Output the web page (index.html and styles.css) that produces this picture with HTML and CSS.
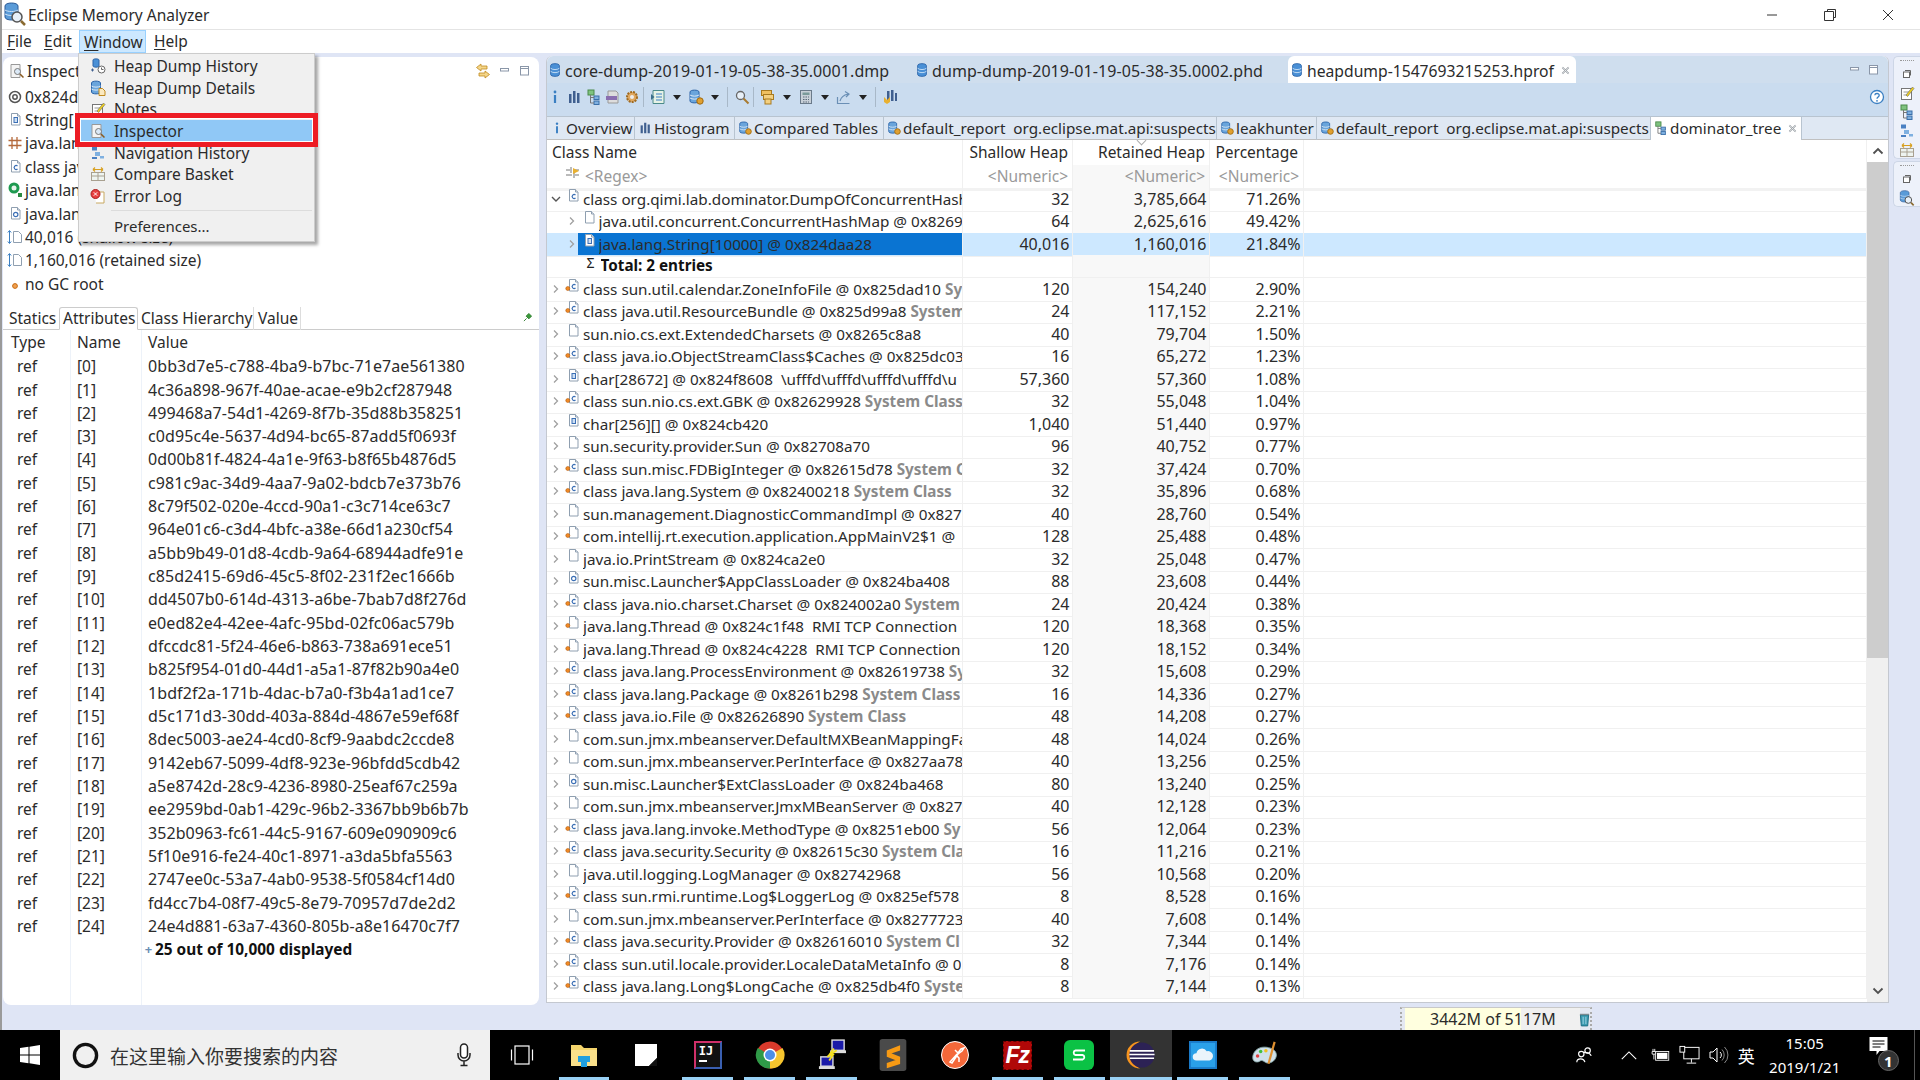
FILE: index.html
```html
<!DOCTYPE html>
<html lang="en">
<head>
<meta charset="utf-8">
<title>Eclipse Memory Analyzer</title>
<link rel="stylesheet" href="styles.css">
</head>
<body>
<svg class="defs" width="0" height="0">
  <symbol id="db" viewBox="0 0 16 16"><path d="M3 3c0-3 10-3 10 0v10c0 3-10 3-10 0z" fill="#4a90d6" stroke="#2a63a8"/><path d="M3 6c2 2 8 2 10 0M3 9.500c2 2 8 2 10 0" stroke="#cfe3f7" fill="none"/></symbol>
  <symbol id="dbc" viewBox="0 0 16 16"><path d="M2 3c0-2.500 9-2.500 9 0v9c0 2.500-9 2.500-9 0z" fill="#6aa5dc" stroke="#2a63a8"/><path d="M2 6c2 1.500 7 1.500 9 0M2 9c2 1.500 7 1.500 9 0" stroke="#dbe9f7" fill="none"/><circle cx="12" cy="12" r="3.200" fill="#e0a030" stroke="#a06a10"/></symbol>
  <symbol id="doc" viewBox="0 0 16 16"><path d="M4.500 1.500h6l2.500 2.500v9h-8.500z" fill="#fff" stroke="#8f9fb0"/><path d="M10.500 1.500v2.500h2.500" fill="#e8eef5" stroke="#8f9fb0"/></symbol>
  <symbol id="cls" viewBox="0 0 16 16"><use href="#doc"/><path d="M10.500 7a2 2 0 1 0 0 3" fill="none" stroke="#3b6fb5" stroke-width="1.200"/></symbol>
  <symbol id="scls" viewBox="0 0 16 16"><use href="#cls"/><circle cx="2.800" cy="10.500" r="2" fill="#f08a24" stroke="#b45a10" stroke-width=".6"/></symbol>
  <symbol id="sdoc" viewBox="0 0 16 16"><use href="#doc"/><circle cx="2.800" cy="10.500" r="2" fill="#f08a24" stroke="#b45a10" stroke-width=".6"/></symbol>
  <symbol id="arr" viewBox="0 0 16 16"><use href="#doc"/><rect x="7" y="5.500" width="3.500" height="5" fill="#cfe0f3" stroke="#3b6fb5"/></symbol>
  <symbol id="ldr" viewBox="0 0 16 16"><use href="#doc"/><circle cx="8.700" cy="8.500" r="2.200" fill="none" stroke="#3b6fb5" stroke-width="1.200"/></symbol>
  <symbol id="sizei" viewBox="0 0 16 16"><path d="M2.500 2v12M.8 3.500 2.500 1.500 4.200 3.500M.8 12.500 2.500 14.500 4.200 12.500" stroke="#3a7fc2" fill="none"/><path d="M6.500 2.500h5l3 3v8h-8z" fill="#fff" stroke="#8f9fb0"/></symbol>
  <symbol id="insp" viewBox="0 0 16 16"><path d="M2 1.500h9v13H2z" fill="#f4f4f4" stroke="#999"/><circle cx="8.500" cy="8.500" r="3" fill="#dbe9f7" stroke="#777"/><path d="m11 11 3.500 3.500" stroke="#8a5a20" stroke-width="1.500"/></symbol>
  <symbol id="hist" viewBox="0 0 16 16"><rect x="3" y="5" width="2.500" height="9" fill="#3f5f8f"/><rect x="7" y="2" width="2.500" height="12" fill="#3f5f8f"/><rect x="11" y="4" width="2.500" height="10" fill="#3f5f8f"/></symbol>
  <symbol id="info" viewBox="0 0 16 16"><circle cx="8" cy="3" r="1.400" fill="#3a7fc2"/><path d="M8 6v8" stroke="#3a7fc2" stroke-width="2.200"/></symbol>
  <symbol id="tree" viewBox="0 0 16 16"><rect x="2" y="1" width="6" height="5" fill="#7fc27f" stroke="#4a8a4a"/><rect x="8" y="7" width="5" height="3.500" fill="#7fb0e0" stroke="#3a6fa8"/><rect x="8" y="12" width="5" height="3.500" fill="#7fb0e0" stroke="#3a6fa8"/><path d="M4.500 6v8h3.500M4.500 8.500h3.500" stroke="#777" fill="none"/></symbol>
  <symbol id="gear" viewBox="0 0 16 16"><circle cx="8" cy="8" r="5" fill="#e0a860" stroke="#a06a20" stroke-width="2" stroke-dasharray="2 1"/><circle cx="8" cy="8" r="2" fill="#eee"/></symbol>
  <symbol id="sql" viewBox="0 0 16 16"><path d="M3 2h8l2 2v10H3z" fill="#ddd" stroke="#999"/><rect x="1" y="7" width="11" height="4" fill="#8a6fb0"/></symbol>
  <symbol id="xml" viewBox="0 0 16 16"><path d="M3 1.500h11v13H3z" fill="#e6f2e6" stroke="#4a8a8a"/><path d="M6 5h6M6 8h6M6 11h6" stroke="#3a7fc2"/><path d="M1 5v6l3.500-3z" fill="#3a6f8a"/></symbol>
  <symbol id="mag" viewBox="0 0 16 16"><circle cx="6.500" cy="6.500" r="4" fill="#e8f0f8" stroke="#666" stroke-width="1.300"/><path d="m9.500 9.500 5 5" stroke="#a87a30" stroke-width="2"/></symbol>
  <symbol id="grp" viewBox="0 0 16 16"><rect x="1.500" y="1.500" width="10" height="5" fill="#f0c060" stroke="#a87a20"/><rect x="3.500" y="5.500" width="10" height="5" fill="#f4d080" stroke="#a87a20"/><rect x="5" y="10" width="6" height="5" fill="#f4d080" stroke="#a87a20"/></symbol>
  <symbol id="calc" viewBox="0 0 16 16"><rect x="2.500" y="1.500" width="11" height="13" fill="#c8d0d8" stroke="#6a7a8a"/><rect x="4.500" y="3.500" width="7" height="2.500" fill="#7a9a9a"/><path d="M5 8h6M5 10.500h6M5 13h6" stroke="#5a6a7a" stroke-dasharray="1.500 1"/></symbol>
  <symbol id="exp" viewBox="0 0 16 16"><path d="M1.500 8v6.500h12" fill="none" stroke="#6a8fb5" stroke-width="1.200"/><path d="M4 12c1-4 4-6 8-7M9 2.500 13 5l-3 3" fill="none" stroke="#6a8fb5" stroke-width="1.200"/></symbol>
  <symbol id="run" viewBox="0 0 16 16"><rect x="5" y="2" width="2.500" height="10" fill="#3f5f8f"/><rect x="9" y="1" width="2.500" height="11" fill="#3f5f8f"/><rect x="13" y="4" width="2" height="8" fill="#3f5f8f"/><path d="M2 8l3 3 3-3v5l-3 2-3-2z" fill="#e8b030"/></symbol>
  <symbol id="sync" viewBox="0 0 16 16"><path d="M6 1 1.500 4.500 6 8V6h6V3H6zM10 8l4.500 3.500L10 15v-2H4v-3h6z" fill="#f4d68a" stroke="#c08a20" stroke-width=".8"/></symbol>
  <symbol id="minv" viewBox="0 0 12 12"><rect x="1.500" y="3.500" width="8" height="2.500" fill="#fff" stroke="#8a96a8"/></symbol>
  <symbol id="maxv" viewBox="0 0 12 12"><rect x="1.500" y="1.500" width="8" height="8.500" fill="#fff" stroke="#8a96a8"/><path d="M1.500 3.500h8" stroke="#8a96a8"/></symbol>
  <symbol id="x" viewBox="0 0 10 10"><path d="M1.500 1.500 8.500 8.500M8.500 1.500 1.500 8.500" stroke="#9aa0a6" stroke-width="1.800"/><path d="M1.500 1.500 8.500 8.500M8.500 1.500 1.500 8.500" stroke="#fff" stroke-width=".6"/></symbol>
  <symbol id="tw-r" viewBox="0 0 18 10"><path d="m7 1.500 3.500 3.500L7 8.500" fill="none" stroke="#a0a0a0" stroke-width="1.300"/></symbol>
  <symbol id="tw-d" viewBox="0 0 18 10"><path d="M5 3 9 7 13 3" fill="none" stroke="#555" stroke-width="1.400"/></symbol>
  <symbol id="dd" viewBox="0 0 8 5"><path d="M0 0h8L4 5z" fill="#222"/></symbol>
  <symbol id="notes" viewBox="0 0 16 16"><rect x="2.500" y="3.500" width="10" height="11" fill="#fff" stroke="#777"/><path d="M4.500 7h6M4.500 10h5" stroke="#999"/><path d="M7 10 13.500 2l1.500 1.500L8.500 11.500z" fill="#f0d020" stroke="#666" stroke-width=".6"/></symbol>
  <symbol id="hist2" viewBox="0 0 16 16"><path d="M3 2c0-1.500 6-1.500 6 0v6c0 1.500-6 1.500-6 0z" fill="#4a90d6" stroke="#2a63a8"/><circle cx="11.500" cy="11.500" r="3.500" fill="#fff" stroke="#666"/><path d="M11.500 9.500v2h2" stroke="#666" fill="none"/><path d="M1 12h3M2.500 10.500v3" stroke="#3f5f8f"/></symbol>
  <symbol id="dbd" viewBox="0 0 16 16"><path d="M1.500 3c0-2.500 9-2.500 9 0v9c0 2.500-9 2.500-9 0z" fill="#6aa5dc" stroke="#2a63a8"/><path d="M1.500 6c2 1.500 7 1.500 9 0M1.500 9c2 1.500 7 1.500 9 0" stroke="#dbe9f7" fill="none"/><path d="M9 8.500h3.500L15 11v4.500H9z" fill="#fbe9c0" stroke="#c08a20"/></symbol>
  <symbol id="nav" viewBox="0 0 16 16"><rect x="2" y="1.500" width="5" height="4" fill="#4a80c2"/><rect x="5" y="7" width="5" height="4" fill="#7fb0e0"/><rect x="10" y="11" width="4" height="2.500" fill="#7fb0e0"/><path d="M2 13h5" stroke="#4a80c2" stroke-width="2"/></symbol>
  <symbol id="bsk" viewBox="0 0 16 16"><rect x="1.500" y="6.500" width="13" height="8" fill="#eef4f0" stroke="#a8a090"/><path d="M8 6.500v8M1.500 10h13" stroke="#a8a090"/><path d="M3 3.500h10M3 3.500 5 1.500M3 3.500 5 5.500M13 3.500 11 1.500M13 3.500 11 5.500" stroke="#d8a020" fill="none" stroke-width="1.200"/></symbol>
  <symbol id="err" viewBox="0 0 16 16"><path d="M5 4h9v11H6" fill="#fff" stroke="#c8a860"/><circle cx="5.500" cy="6" r="4.500" fill="#e84040" stroke="#a82020"/><path d="m3.800 4.300 3.400 3.400m0-3.400L3.800 7.700" stroke="#fff"/></symbol>
  <symbol id="filt" viewBox="0 0 16 16"><path d="M1 5h4M8 5h6M1 10h6M10 10h4M6 2v6M9 7v6" stroke="#777"/><path d="M8 3l6 3-6 3z" fill="#e8b030"/></symbol>
  <symbol id="pkg" viewBox="0 0 16 16"><path d="M5 2v12M10 2v12M1.500 5.500h13M1.500 10.500h13" stroke="#b4683a" stroke-width="1.300"/></symbol>
  <symbol id="at" viewBox="0 0 16 16"><circle cx="8" cy="8" r="5.500" fill="none" stroke="#555" stroke-width="1.500"/><circle cx="8" cy="8" r="2.200" fill="none" stroke="#555" stroke-width="1.500"/></symbol>
  <symbol id="gc" viewBox="0 0 16 16"><circle cx="7" cy="6" r="5.500" fill="#1e9a50"/><circle cx="7" cy="6" r="2.500" fill="#e8f4ec"/><path d="M11 11h4v4h-4z" fill="#2a8a40"/></symbol>
  <symbol id="dot" viewBox="0 0 16 16"><circle cx="8" cy="10" r="2.400" fill="#f0a050" stroke="#c86a10"/></symbol>
  <symbol id="pin" viewBox="0 0 10 10"><path d="M1 9 4 6M3.500 3.500l3-3 3 3-3 3z" fill="#3a9a3a" stroke="#2a7a2a"/></symbol>
  <symbol id="trash" viewBox="0 0 12 16"><path d="M1.500 3h9l-1 12h-7z" fill="#3a9ab0" stroke="#1a6a80"/><path d="M1 2.500h10" stroke="#7a8a90" stroke-width="1.500"/><path d="M4.500 5v8M7.500 5v8" stroke="#a8d8e8"/></symbol>
  <symbol id="help" viewBox="0 0 16 16"><circle cx="8" cy="8" r="6.500" fill="#fff" stroke="#3a7fc2" stroke-width="1.300"/><path d="M5.800 6.200C6 3.800 10.300 4 10.200 6.300 10.200 8 8 8 8 9.800" fill="none" stroke="#3a7fc2" stroke-width="1.300"/><circle cx="8" cy="11.800" r=".9" fill="#3a7fc2"/></symbol>
  <symbol id="restv" viewBox="0 0 12 12"><path d="M4 2.500h5.500v5" fill="none" stroke="#666"/><rect x="2.500" y="4" width="6" height="5.500" fill="#fff" stroke="#666"/></symbol>
  <symbol id="app" viewBox="0 0 24 24"><path d="M2 4c0-4 13-4 13 0v11c0 4-13 4-13 0z" fill="#5a9bd8" stroke="#2a5a98"/><path d="M2 8c3 2 10 2 13 0M2 12c3 2 10 2 13 0" stroke="#cfe3f7" fill="none"/><circle cx="14" cy="15" r="5" fill="#e8f0f8" stroke="#555" stroke-width="1.500"/><path d="m18 19 4 4" stroke="#8a6a30" stroke-width="2.500"/></symbol>
</svg>

<div class="app">
  <header class="titlebar">
    <svg class="title-icon"><use href="#app"/></svg>
    <span class="title-text">Eclipse Memory Analyzer</span>
    <div class="winctl">
      <svg viewBox="0 0 12 12" class="wc"><path d="M1 6h10" stroke="#333"/></svg>
      <svg viewBox="0 0 12 12" class="wc"><path d="M3.500 2.500V.5h8v8h-2M.5 2.500h9v9h-9z" fill="none" stroke="#333"/></svg>
      <svg viewBox="0 0 12 12" class="wc"><path d="m1 1 10 10M11 1 1 11" stroke="#333"/></svg>
    </div>
  </header>

  <nav class="menubar">
    <span class="mb-item mb-file"><u>F</u>ile</span>
    <span class="mb-item mb-edit"><u>E</u>dit</span>
    <span class="mb-item mb-win"><u>W</u>indow</span>
    <span class="mb-item mb-help"><u>H</u>elp</span>
  </nav>

  <div class="workspace">
    <section class="left">
      <div class="left-head">
        <svg class="lic"><use href="#insp"/></svg><span>Inspector</span>
        <span class="spacer"></span>
        <svg class="vb big"><use href="#sync"/></svg>
        <svg class="vb"><use href="#minv"/></svg>
        <svg class="vb"><use href="#maxv"/></svg>
      </div>
      <div class="prop"><svg class="lic"><use href="#at"/></svg>0x824daa28</div>
      <div class="prop"><svg class="lic"><use href="#arr"/></svg>String[10000]</div>
      <div class="prop"><svg class="lic"><use href="#pkg"/></svg>java.lang</div>
      <div class="prop"><svg class="lic"><use href="#cls"/></svg>class java.lang.String[]</div>
      <div class="prop"><svg class="lic"><use href="#gc"/></svg>java.lang.Class</div>
      <div class="prop"><svg class="lic"><use href="#ldr"/></svg>java.lang.ClassLoader</div>
      <div class="prop"><svg class="lic"><use href="#sizei"/></svg>40,016 (shallow size)</div>
      <div class="prop"><svg class="lic"><use href="#sizei"/></svg>1,160,016 (retained size)</div>
      <div class="prop"><svg class="lic"><use href="#dot"/></svg>no GC root</div>

      <div class="ltabs">
        <span class="ltab w-st">Statics</span>
        <span class="ltab w-at on">Attributes</span>
        <span class="ltab w-ch">Class Hierarchy</span>
        <span class="ltab w-va">Value</span>
        <span class="spacer"></span>
        <svg class="pin"><use href="#pin"/></svg>
      </div>
      <div class="ltable">
        <div class="lrow lhead"><span class="c1h">Type</span><span class="c2">Name</span><span class="c3">Value</span></div>
        <div class="lrow"><span class="c1">ref</span><span class="c2">[0]</span><span class="c3">0bb3d7e5-c788-4ba9-b7bc-71e7ae561380</span></div>
        <div class="lrow"><span class="c1">ref</span><span class="c2">[1]</span><span class="c3">4c36a898-967f-40ae-acae-e9b2cf287948</span></div>
        <div class="lrow"><span class="c1">ref</span><span class="c2">[2]</span><span class="c3">499468a7-54d1-4269-8f7b-35d88b358251</span></div>
        <div class="lrow"><span class="c1">ref</span><span class="c2">[3]</span><span class="c3">c0d95c4e-5637-4d94-bc65-87add5f0693f</span></div>
        <div class="lrow"><span class="c1">ref</span><span class="c2">[4]</span><span class="c3">0d00b81f-4824-4a1e-9f63-b8f65b4876d5</span></div>
        <div class="lrow"><span class="c1">ref</span><span class="c2">[5]</span><span class="c3">c981c9ac-34d9-4aa7-9a02-bdcb7e373b76</span></div>
        <div class="lrow"><span class="c1">ref</span><span class="c2">[6]</span><span class="c3">8c79f502-020e-4ccd-90a1-c3c714ce63c7</span></div>
        <div class="lrow"><span class="c1">ref</span><span class="c2">[7]</span><span class="c3">964e01c6-c3d4-4bfc-a38e-66d1a230cf54</span></div>
        <div class="lrow"><span class="c1">ref</span><span class="c2">[8]</span><span class="c3">a5bb9b49-01d8-4cdb-9a64-68944adfe91e</span></div>
        <div class="lrow"><span class="c1">ref</span><span class="c2">[9]</span><span class="c3">c85d2415-69d6-45c5-8f02-231f2ec1666b</span></div>
        <div class="lrow"><span class="c1">ref</span><span class="c2">[10]</span><span class="c3">dd4507b0-614d-4313-a6be-7bab7d8f276d</span></div>
        <div class="lrow"><span class="c1">ref</span><span class="c2">[11]</span><span class="c3">e0ed82e4-42ee-4afc-95bd-02fc06ac579b</span></div>
        <div class="lrow"><span class="c1">ref</span><span class="c2">[12]</span><span class="c3">dfccdc81-5f24-46e6-b863-738a691ece51</span></div>
        <div class="lrow"><span class="c1">ref</span><span class="c2">[13]</span><span class="c3">b825f954-01d0-44d1-a5a1-87f82b90a4e0</span></div>
        <div class="lrow"><span class="c1">ref</span><span class="c2">[14]</span><span class="c3">1bdf2f2a-171b-4dac-b7a0-f3b4a1ad1ce7</span></div>
        <div class="lrow"><span class="c1">ref</span><span class="c2">[15]</span><span class="c3">d5c171d3-30dd-403a-884d-4867e59ef68f</span></div>
        <div class="lrow"><span class="c1">ref</span><span class="c2">[16]</span><span class="c3">8dec5003-ae24-4cd0-8cf9-9aabdc2ccde8</span></div>
        <div class="lrow"><span class="c1">ref</span><span class="c2">[17]</span><span class="c3">9142eb67-5099-4df8-923e-96bfdd5cdb42</span></div>
        <div class="lrow"><span class="c1">ref</span><span class="c2">[18]</span><span class="c3">a5e8742d-28c9-4236-8980-25eaf67c259a</span></div>
        <div class="lrow"><span class="c1">ref</span><span class="c2">[19]</span><span class="c3">ee2959bd-0ab1-429c-96b2-3367bb9b6b7b</span></div>
        <div class="lrow"><span class="c1">ref</span><span class="c2">[20]</span><span class="c3">352b0963-fc61-44c5-9167-609e090909c6</span></div>
        <div class="lrow"><span class="c1">ref</span><span class="c2">[21]</span><span class="c3">5f10e916-fe24-40c1-8971-a3da5bfa5563</span></div>
        <div class="lrow"><span class="c1">ref</span><span class="c2">[22]</span><span class="c3">2747ee0c-53a7-4ab0-9538-5f0584cf14d0</span></div>
        <div class="lrow"><span class="c1">ref</span><span class="c2">[23]</span><span class="c3">fd4cc7b4-08f7-49c5-8e79-70957d7de2d2</span></div>
        <div class="lrow"><span class="c1">ref</span><span class="c2">[24]</span><span class="c3">24e4d881-63a7-4360-805b-a8e16470c7f7</span></div>
        <div class="lrow"><span class="c1"></span><span class="c2"></span><span class="c3 more"><b class="plus">+</b><b>25 out of 10,000 displayed</b></span></div>
        <div class="lrow lfill"><span class="c1"></span><span class="c2"></span><span class="c3"></span></div>
      </div>
    </section>

    <section class="right">
      <div class="ftabs">
        <span class="ftab f1"><svg class="tic"><use href="#db"/></svg>core-dump-2019-01-19-05-38-35.0001.dmp</span>
        <span class="ftab f2"><svg class="tic"><use href="#db"/></svg>dump-dump-2019-01-19-05-38-35.0002.phd</span>
        <span class="ftab f3 on"><svg class="tic"><use href="#db"/></svg>heapdump-1547693215253.hprof<svg class="xic"><use href="#x"/></svg></span>
        <span class="spacer"></span>
        <svg class="vb"><use href="#minv"/></svg>
        <svg class="vb end"><use href="#maxv"/></svg>
      </div>
      <div class="toolbar">
        <svg class="tb"><use href="#info"/></svg>
        <svg class="tb"><use href="#hist"/></svg>
        <svg class="tb"><use href="#tree"/></svg>
        <svg class="tb"><use href="#sql"/></svg>
        <svg class="tb"><use href="#gear"/></svg>
        <i class="tsep"></i>
        <svg class="tb"><use href="#xml"/></svg><svg class="ddi"><use href="#dd"/></svg>
        <svg class="tb"><use href="#dbc"/></svg><svg class="ddi"><use href="#dd"/></svg>
        <i class="tsep"></i>
        <svg class="tb"><use href="#mag"/></svg>
        <i class="tsep"></i>
        <svg class="tb"><use href="#grp"/></svg><svg class="ddi"><use href="#dd"/></svg>
        <svg class="tb"><use href="#calc"/></svg><svg class="ddi"><use href="#dd"/></svg>
        <svg class="tb"><use href="#exp"/></svg><svg class="ddi"><use href="#dd"/></svg>
        <i class="tsep"></i>
        <svg class="tb"><use href="#run"/></svg>
        <span class="spacer"></span>
        <svg class="tb hlp"><use href="#help"/></svg>
      </div>
      <div class="itabs">
        <span class="itab i1"><svg class="tic"><use href="#info"/></svg>Overview</span>
        <span class="itab i2"><svg class="tic"><use href="#hist"/></svg>Histogram</span>
        <span class="itab i3"><svg class="tic"><use href="#dbc"/></svg>Compared Tables</span>
        <span class="itab i4"><svg class="tic"><use href="#dbc"/></svg>default_report  org.eclipse.mat.api:suspects</span>
        <span class="itab i5"><svg class="tic"><use href="#dbc"/></svg>leakhunter</span>
        <span class="itab i6"><svg class="tic"><use href="#dbc"/></svg>default_report  org.eclipse.mat.api:suspects</span>
        <span class="itab i7 on"><svg class="tic"><use href="#tree"/></svg>dominator_tree<svg class="xic"><use href="#x"/></svg></span>
      </div>
      <div class="tablewrap">
        <div class="tree">
          <div class="row head"><span class="name hn">Class Name</span><span class="num">Shallow Heap</span><span class="num ret sorted">Retained Heap</span><span class="num pct">Percentage</span><span class="rest"></span></div>
          <div class="row filter"><span class="name fn"><svg class="ic"><use href="#filt"/></svg>&lt;Regex&gt;</span><span class="num">&lt;Numeric&gt;</span><span class="num ret">&lt;Numeric&gt;</span><span class="num">&lt;Numeric&gt;</span><span class="rest"></span></div>

          <div class="row"><span class="name"><svg class="tw"><use href="#tw-d"/></svg><svg class="ic"><use href="#cls"/></svg><span class="t">class org.qimi.lab.dominator.DumpOfConcurrentHash</span></span><span class="num">32</span><span class="num ret">3,785,664</span><span class="num">71.26%</span><span class="rest"></span></div>
          <div class="row l1"><span class="name"><svg class="tw"><use href="#tw-r"/></svg><svg class="ic"><use href="#doc"/></svg><span class="t">java.util.concurrent.ConcurrentHashMap @ 0x8269</span></span><span class="num">64</span><span class="num ret">2,625,616</span><span class="num">49.42%</span><span class="rest"></span></div>
          <div class="row l1 sel"><span class="name"><svg class="tw"><use href="#tw-r"/></svg><span class="selbox"><svg class="ic"><use href="#arr"/></svg><span class="t">java.lang.String[10000] @ 0x824daa28</span></span></span><span class="num">40,016</span><span class="num ret">1,160,016</span><span class="num">21.84%</span><span class="rest"></span></div>
          <div class="row l1 total"><span class="name"><span class="tw"></span><span class="sig">Σ</span><b class="t">Total: 2 entries</b></span><span class="num"></span><span class="num ret"></span><span class="num"></span><span class="rest"></span></div>

          <div class="row"><span class="name"><svg class="tw"><use href="#tw-r"/></svg><svg class="ic"><use href="#scls"/></svg><span class="t">class sun.util.calendar.ZoneInfoFile @ 0x825dad10 <b class="g">Sy</b></span></span><span class="num">120</span><span class="num ret">154,240</span><span class="num">2.90%</span><span class="rest"></span></div>
          <div class="row"><span class="name"><svg class="tw"><use href="#tw-r"/></svg><svg class="ic"><use href="#scls"/></svg><span class="t">class java.util.ResourceBundle @ 0x825d99a8 <b class="g">System</b></span></span><span class="num">24</span><span class="num ret">117,152</span><span class="num">2.21%</span><span class="rest"></span></div>
          <div class="row"><span class="name"><svg class="tw"><use href="#tw-r"/></svg><svg class="ic"><use href="#doc"/></svg><span class="t">sun.nio.cs.ext.ExtendedCharsets @ 0x8265c8a8</span></span><span class="num">40</span><span class="num ret">79,704</span><span class="num">1.50%</span><span class="rest"></span></div>
          <div class="row"><span class="name"><svg class="tw"><use href="#tw-r"/></svg><svg class="ic"><use href="#scls"/></svg><span class="t">class java.io.ObjectStreamClass$Caches @ 0x825dc03</span></span><span class="num">16</span><span class="num ret">65,272</span><span class="num">1.23%</span><span class="rest"></span></div>
          <div class="row"><span class="name"><svg class="tw"><use href="#tw-r"/></svg><svg class="ic"><use href="#arr"/></svg><span class="t">char[28672] @ 0x824f8608  \ufffd\ufffd\ufffd\ufffd\u</span></span><span class="num">57,360</span><span class="num ret">57,360</span><span class="num">1.08%</span><span class="rest"></span></div>
          <div class="row"><span class="name"><svg class="tw"><use href="#tw-r"/></svg><svg class="ic"><use href="#scls"/></svg><span class="t">class sun.nio.cs.ext.GBK @ 0x82629928 <b class="g">System Class</b></span></span><span class="num">32</span><span class="num ret">55,048</span><span class="num">1.04%</span><span class="rest"></span></div>
          <div class="row"><span class="name"><svg class="tw"><use href="#tw-r"/></svg><svg class="ic"><use href="#arr"/></svg><span class="t">char[256][] @ 0x824cb420</span></span><span class="num">1,040</span><span class="num ret">51,440</span><span class="num">0.97%</span><span class="rest"></span></div>
          <div class="row"><span class="name"><svg class="tw"><use href="#tw-r"/></svg><svg class="ic"><use href="#doc"/></svg><span class="t">sun.security.provider.Sun @ 0x82708a70</span></span><span class="num">96</span><span class="num ret">40,752</span><span class="num">0.77%</span><span class="rest"></span></div>
          <div class="row"><span class="name"><svg class="tw"><use href="#tw-r"/></svg><svg class="ic"><use href="#scls"/></svg><span class="t">class sun.misc.FDBigInteger @ 0x82615d78 <b class="g">System C</b></span></span><span class="num">32</span><span class="num ret">37,424</span><span class="num">0.70%</span><span class="rest"></span></div>
          <div class="row"><span class="name"><svg class="tw"><use href="#tw-r"/></svg><svg class="ic"><use href="#scls"/></svg><span class="t">class java.lang.System @ 0x82400218 <b class="g">System Class</b></span></span><span class="num">32</span><span class="num ret">35,896</span><span class="num">0.68%</span><span class="rest"></span></div>
          <div class="row"><span class="name"><svg class="tw"><use href="#tw-r"/></svg><svg class="ic"><use href="#doc"/></svg><span class="t">sun.management.DiagnosticCommandImpl @ 0x827</span></span><span class="num">40</span><span class="num ret">28,760</span><span class="num">0.54%</span><span class="rest"></span></div>
          <div class="row"><span class="name"><svg class="tw"><use href="#tw-r"/></svg><svg class="ic"><use href="#sdoc"/></svg><span class="t">com.intellij.rt.execution.application.AppMainV2$1 @</span></span><span class="num">128</span><span class="num ret">25,488</span><span class="num">0.48%</span><span class="rest"></span></div>
          <div class="row"><span class="name"><svg class="tw"><use href="#tw-r"/></svg><svg class="ic"><use href="#doc"/></svg><span class="t">java.io.PrintStream @ 0x824ca2e0</span></span><span class="num">32</span><span class="num ret">25,048</span><span class="num">0.47%</span><span class="rest"></span></div>
          <div class="row"><span class="name"><svg class="tw"><use href="#tw-r"/></svg><svg class="ic"><use href="#ldr"/></svg><span class="t">sun.misc.Launcher$AppClassLoader @ 0x824ba408</span></span><span class="num">88</span><span class="num ret">23,608</span><span class="num">0.44%</span><span class="rest"></span></div>
          <div class="row"><span class="name"><svg class="tw"><use href="#tw-r"/></svg><svg class="ic"><use href="#scls"/></svg><span class="t">class java.nio.charset.Charset @ 0x824002a0 <b class="g">System</b></span></span><span class="num">24</span><span class="num ret">20,424</span><span class="num">0.38%</span><span class="rest"></span></div>
          <div class="row"><span class="name"><svg class="tw"><use href="#tw-r"/></svg><svg class="ic"><use href="#sdoc"/></svg><span class="t">java.lang.Thread @ 0x824c1f48  RMI TCP Connection</span></span><span class="num">120</span><span class="num ret">18,368</span><span class="num">0.35%</span><span class="rest"></span></div>
          <div class="row"><span class="name"><svg class="tw"><use href="#tw-r"/></svg><svg class="ic"><use href="#sdoc"/></svg><span class="t">java.lang.Thread @ 0x824c4228  RMI TCP Connection</span></span><span class="num">120</span><span class="num ret">18,152</span><span class="num">0.34%</span><span class="rest"></span></div>
          <div class="row"><span class="name"><svg class="tw"><use href="#tw-r"/></svg><svg class="ic"><use href="#scls"/></svg><span class="t">class java.lang.ProcessEnvironment @ 0x82619738 <b class="g">Sy</b></span></span><span class="num">32</span><span class="num ret">15,608</span><span class="num">0.29%</span><span class="rest"></span></div>
          <div class="row"><span class="name"><svg class="tw"><use href="#tw-r"/></svg><svg class="ic"><use href="#scls"/></svg><span class="t">class java.lang.Package @ 0x8261b298 <b class="g">System Class</b></span></span><span class="num">16</span><span class="num ret">14,336</span><span class="num">0.27%</span><span class="rest"></span></div>
          <div class="row"><span class="name"><svg class="tw"><use href="#tw-r"/></svg><svg class="ic"><use href="#scls"/></svg><span class="t">class java.io.File @ 0x82626890 <b class="g">System Class</b></span></span><span class="num">48</span><span class="num ret">14,208</span><span class="num">0.27%</span><span class="rest"></span></div>
          <div class="row"><span class="name"><svg class="tw"><use href="#tw-r"/></svg><svg class="ic"><use href="#doc"/></svg><span class="t">com.sun.jmx.mbeanserver.DefaultMXBeanMappingFa</span></span><span class="num">48</span><span class="num ret">14,024</span><span class="num">0.26%</span><span class="rest"></span></div>
          <div class="row"><span class="name"><svg class="tw"><use href="#tw-r"/></svg><svg class="ic"><use href="#doc"/></svg><span class="t">com.sun.jmx.mbeanserver.PerInterface @ 0x827aa780</span></span><span class="num">40</span><span class="num ret">13,256</span><span class="num">0.25%</span><span class="rest"></span></div>
          <div class="row"><span class="name"><svg class="tw"><use href="#tw-r"/></svg><svg class="ic"><use href="#ldr"/></svg><span class="t">sun.misc.Launcher$ExtClassLoader @ 0x824ba468</span></span><span class="num">80</span><span class="num ret">13,240</span><span class="num">0.25%</span><span class="rest"></span></div>
          <div class="row"><span class="name"><svg class="tw"><use href="#tw-r"/></svg><svg class="ic"><use href="#doc"/></svg><span class="t">com.sun.jmx.mbeanserver.JmxMBeanServer @ 0x8274</span></span><span class="num">40</span><span class="num ret">12,128</span><span class="num">0.23%</span><span class="rest"></span></div>
          <div class="row"><span class="name"><svg class="tw"><use href="#tw-r"/></svg><svg class="ic"><use href="#scls"/></svg><span class="t">class java.lang.invoke.MethodType @ 0x8251eb00 <b class="g">Sy</b></span></span><span class="num">56</span><span class="num ret">12,064</span><span class="num">0.23%</span><span class="rest"></span></div>
          <div class="row"><span class="name"><svg class="tw"><use href="#tw-r"/></svg><svg class="ic"><use href="#scls"/></svg><span class="t">class java.security.Security @ 0x82615c30 <b class="g">System Cla</b></span></span><span class="num">16</span><span class="num ret">11,216</span><span class="num">0.21%</span><span class="rest"></span></div>
          <div class="row"><span class="name"><svg class="tw"><use href="#tw-r"/></svg><svg class="ic"><use href="#doc"/></svg><span class="t">java.util.logging.LogManager @ 0x82742968</span></span><span class="num">56</span><span class="num ret">10,568</span><span class="num">0.20%</span><span class="rest"></span></div>
          <div class="row"><span class="name"><svg class="tw"><use href="#tw-r"/></svg><svg class="ic"><use href="#scls"/></svg><span class="t">class sun.rmi.runtime.Log$LoggerLog @ 0x825ef578</span></span><span class="num">8</span><span class="num ret">8,528</span><span class="num">0.16%</span><span class="rest"></span></div>
          <div class="row"><span class="name"><svg class="tw"><use href="#tw-r"/></svg><svg class="ic"><use href="#doc"/></svg><span class="t">com.sun.jmx.mbeanserver.PerInterface @ 0x8277723</span></span><span class="num">40</span><span class="num ret">7,608</span><span class="num">0.14%</span><span class="rest"></span></div>
          <div class="row"><span class="name"><svg class="tw"><use href="#tw-r"/></svg><svg class="ic"><use href="#scls"/></svg><span class="t">class java.security.Provider @ 0x82616010 <b class="g">System Cl</b></span></span><span class="num">32</span><span class="num ret">7,344</span><span class="num">0.14%</span><span class="rest"></span></div>
          <div class="row"><span class="name"><svg class="tw"><use href="#tw-r"/></svg><svg class="ic"><use href="#scls"/></svg><span class="t">class sun.util.locale.provider.LocaleDataMetaInfo @ 0</span></span><span class="num">8</span><span class="num ret">7,176</span><span class="num">0.14%</span><span class="rest"></span></div>
          <div class="row"><span class="name"><svg class="tw"><use href="#tw-r"/></svg><svg class="ic"><use href="#scls"/></svg><span class="t">class java.lang.Long$LongCache @ 0x825db4f0 <b class="g">Syste</b></span></span><span class="num">8</span><span class="num ret">7,144</span><span class="num">0.13%</span><span class="rest"></span></div>
        </div>
        <div class="scroll">
          <div class="sbtn"><svg viewBox="0 0 12 8" class="sarrow"><path d="m1.500 6.500 4.500-4.500 4.500 4.500" fill="none" stroke="#505050" stroke-width="1.800"/></svg></div>
          <div class="sthumb"></div>
          <div class="strack"></div>
          <div class="sbtn"><svg viewBox="0 0 12 8" class="sarrow"><path d="m1.500 1.500 4.500 4.500 4.500-4.500" fill="none" stroke="#505050" stroke-width="1.800"/></svg></div>
        </div>
      </div>
    </section>

    <aside class="trim">
      <div class="tgroup g1">
        <i class="grip"></i>
        <svg class="trimic sm"><use href="#restv"/></svg>
        <svg class="trimic"><use href="#notes"/></svg>
        <svg class="trimic"><use href="#tree"/></svg>
        <svg class="trimic"><use href="#nav"/></svg>
        <svg class="trimic"><use href="#bsk"/></svg>
      </div>
      <div class="tgroup g2">
        <i class="grip"></i>
        <svg class="trimic sm"><use href="#restv"/></svg>
        <svg class="trimic"><use href="#app"/></svg>
      </div>
    </aside>
  </div>

  <div class="status">
    <div class="gauge"><span class="gtext">3442M of 5117M</span><svg class="trash"><use href="#trash"/></svg></div>
  </div>

  <footer class="taskbar">
    <div class="start"><svg viewBox="0 0 20 20" class="winlogo"><path d="M0 3 8.500 1.800v7.700H0zM9.500 1.700 20 0v9.500H9.500zM0 10.500h8.500v7.700L0 17zM9.500 10.500H20V20L9.500 18.300z" fill="#fff"/></svg></div>
    <div class="search">
      <svg viewBox="0 0 28 28" class="cortana"><circle cx="14" cy="14" r="11.500" fill="none" stroke="#111" stroke-width="3.500"/></svg>
      <span class="stext">在这里输入你要搜索的内容</span>
      <svg viewBox="0 0 14 24" class="micro"><rect x="3.500" y="1" width="7" height="14" rx="3.500" fill="#fff" stroke="#222" stroke-width="1.500"/><path d="M1 10v2a6 6 0 0 0 12 0v-2M7 18v4M3.500 22.500h7" fill="none" stroke="#222" stroke-width="1.500"/></svg>
    </div>
    <div class="tview"><svg viewBox="0 0 24 24" class="tvi"><rect x="5" y="3" width="14" height="18" fill="none" stroke="#fff" stroke-width="1.200"/><path d="M1.500 6.500v11M22.500 6.500v11" stroke="#fff" stroke-width="1.200"/></svg></div>
    <div class="tapp run"><svg viewBox="0 0 28 28" class="tai"><path d="M1 4h10l3 3h13v18H1z" fill="#f4d46c"/><path d="M1 9h26v16H1z" fill="#fae08a"/><rect x="8" y="15" width="12" height="6" fill="#1f9fe0"/><rect x="11" y="18" width="6" height="8" fill="#1f9fe0"/></svg></div>
    <div class="tapp"><svg viewBox="0 0 28 28" class="tai"><path d="M3 3h22v14l-8 8H3z" fill="#fff"/><path d="M25 17v8h-8z" fill="#111"/></svg></div>
    <div class="tapp run"><span class="ij"><span class="ijt">IJ</span><i class="iju"></i></span></div>
    <div class="tapp run"><svg viewBox="0 0 28 28" class="tai"><circle cx="14" cy="14" r="13.500" fill="#d93a2c"/><path d="M14 14 26.500 7A13.500 13.500 0 0 1 14 27.500z" fill="#f6c52e"/><path d="M14 14 14 27.500A13.500 13.500 0 0 1 1.800 7z" fill="#2f9a48"/><circle cx="14" cy="14" r="6.500" fill="#fff"/><circle cx="14" cy="14" r="5" fill="#4d8fe8"/></svg></div>
    <div class="tapp run"><svg viewBox="0 0 30 34" class="tai tall"><rect x="15" y="1" width="13" height="11" fill="#1a1aa8" stroke="#ddd" stroke-width="1.500"/><rect x="13" y="12" width="17" height="3" fill="#ddd"/><rect x="3" y="19" width="13" height="10" fill="#1a1aa8" stroke="#ddd" stroke-width="1.500"/><rect x="1" y="29" width="17" height="3" fill="#ddd"/><path d="m10 19 10-7M17 10l-5 7h4l-4 6" fill="none" stroke="#f4e020" stroke-width="2"/></svg></div>
    <div class="tapp"><svg viewBox="0 0 30 36" class="tai tall"><rect width="30" height="36" rx="3" fill="#4a4a4a"/><path d="M23 7v6L8 18v-5zM8 14l15 6v6L8 20zM23 22v6L8 33v-6z" fill="#f79a14"/></svg></div>
    <div class="tapp"><svg viewBox="0 0 28 28" class="tai"><circle cx="14" cy="14" r="13.500" fill="#f4683a" stroke="#fff"/><path d="M9 21 17 12l3-4 3-1-2 3-4 3-6 9zM17 12l-3-3M15 14l3 3v4" stroke="#fff" fill="none" stroke-width="1.500"/></svg></div>
    <div class="tapp run"><span class="fz">Fz</span></div>
    <div class="tapp run"><span class="wps"><svg viewBox="0 0 20 20" class="wpss"><path d="M16 5.500H6.500a2.300 2.300 0 0 0 0 4.500h7a2.300 2.300 0 0 1 0 4.500H4" fill="none" stroke="#fff" stroke-width="1.800"/></svg></span></div>
    <div class="tapp run cur"><svg viewBox="0 0 30 30" class="tai"><path d="M14 .5A14.500 14.500 0 1 0 14 29.500 16 16 0 0 1 14 .5z" fill="#f7941e"/><circle cx="16" cy="15" r="13.500" fill="#2c2255"/><path d="M3 10.500h26M2.500 14.500h27M3 18.500h26" stroke="#fff" stroke-width="1.800"/></svg></div>
    <div class="tapp run"><svg viewBox="0 0 30 30" class="tai"><rect width="30" height="30" fill="#1a7ac8"/><rect x="2" y="2" width="26" height="26" fill="#2aa0e8"/><path d="M8 21a4 4 0 0 1 0-8 6 6 0 0 1 11-2 5 5 0 0 1 3 10z" fill="#eaf4fb"/></svg></div>
    <div class="tapp run"><svg viewBox="0 0 30 32" class="tai"><path d="M14 7C6 7 1 13 1 19c0 5 5 6 8 4 3-2 5 1 8 2 6 1 11-4 11-9 0-6-7-9-14-9z" fill="#cfe0ea" stroke="#8aa"/><circle cx="6.500" cy="17" r="2" fill="#e04040"/><circle cx="10" cy="12" r="2" fill="#40c040"/><circle cx="16" cy="11" r="2" fill="#f0c020"/><path d="m26 1-7 25" stroke="#e09030" stroke-width="2.500"/></svg></div>
    <div class="tray">
      <svg viewBox="0 0 20 20" class="tr-i"><circle cx="14" cy="5" r="3" fill="none" stroke="#fff" stroke-width="1.300"/><circle cx="7" cy="9" r="3" fill="none" stroke="#fff" stroke-width="1.300"/><path d="M2 18c0-5 8-5 9 0M10 7c3 0 7 1 8 4" fill="none" stroke="#fff" stroke-width="1.300"/></svg>
      <svg viewBox="0 0 20 12" class="tr-c"><path d="m2 10 8-8 8 8" fill="none" stroke="#fff" stroke-width="1.200"/></svg>
      <svg viewBox="0 0 22 16" class="tr-b"><rect x="6" y="4" width="15" height="10" fill="none" stroke="#fff"/><rect x="7.500" y="5.500" width="12" height="7" fill="#fff"/><path d="M3 1v3M5 1v3M2 4h4v3H2zM4 7v6" stroke="#fff"/></svg>
      <svg viewBox="0 0 22 20" class="tr-n"><rect x="5" y="2" width="16" height="12" fill="none" stroke="#fff"/><rect x="1" y="1" width="5" height="6" fill="#000" stroke="#fff"/><path d="M13 14v4M8 18.500h10" stroke="#fff"/></svg>
      <svg viewBox="0 0 20 20" class="tr-v"><path d="M2 7h3l4-4v14l-4-4H2z" fill="none" stroke="#fff"/><path d="M12 7a4 4 0 0 1 0 6" fill="none" stroke="#fff"/><path d="M14 4.500a8 8 0 0 1 0 11M16.500 2a11 11 0 0 1 0 16" fill="none" stroke="#888"/></svg>
      <span class="ime">英</span>
      <div class="clock"><span>15:05</span><span>2019/1/21</span></div>
      <div class="notif"><svg viewBox="0 0 20 20" class="nbub"><path d="M1 1h18v14h-8l-3 4v-4H1z" fill="#fff"/><path d="M4 5h12M4 8h12M4 11h8" stroke="#000"/></svg><span class="nbadge">1</span></div>
      <i class="showdesk"></i>
    </div>
  </footer>

  <div class="menu">
    <div class="mi"><svg class="mic"><use href="#hist2"/></svg>Heap Dump History</div>
    <div class="mi"><svg class="mic"><use href="#dbd"/></svg>Heap Dump Details</div>
    <div class="mi"><svg class="mic"><use href="#notes"/></svg>Notes</div>
    <div class="mi hi"><svg class="mic"><use href="#insp"/></svg>Inspector<i class="redbox"></i></div>
    <div class="mi"><svg class="mic"><use href="#nav"/></svg>Navigation History</div>
    <div class="mi"><svg class="mic"><use href="#bsk"/></svg>Compare Basket</div>
    <div class="mi"><svg class="mic"><use href="#err"/></svg>Error Log</div>
    <div class="msep"></div>
    <div class="mi mi-pref"><span class="mic"></span>Preferences...</div>
  </div>
</div>
</body>
</html>
```

FILE: styles.css
```css
* { box-sizing: border-box; }
html, body { margin: 0; padding: 0; }
body { width: 1920px; height: 1080px; overflow: hidden; font-family: "Noto Sans", "Open Sans", sans-serif; font-size: 15.5px; color: #2b2b2b; background: #dfe5f5; }
.defs { position: absolute; }
svg { display: block; flex: none; overflow: visible; }
.spacer { flex: 1; }
.app { position: relative; width: 1920px; height: 1080px; display: flex; flex-direction: column; border-left: 2px solid #9a9a9a; }

.titlebar { height: 29px; display: flex; align-items: center; background: #fff; padding-left: 1px; }
.title-icon { width: 24px; height: 24px; margin-top: -2px; }
.title-text { margin-left: 1px; }
.winctl { margin-left: auto; display: flex; padding-right: 26px; }
.wc { width: 12px; height: 12px; margin-left: 46px; }

.menubar { height: 24px; display: flex; background: #fff; border-top: 1px solid #e4e4e4; padding-left: 5px; }
.mb-item { display: flex; align-items: center; height: 22px; }
.mb-item u { text-underline-offset: 2px; }
.mb-file { width: 37px; }
.mb-edit { width: 35px; }
.mb-win { width: 67px; height: 23px; padding-left: 4px; background: #cce8ff; border: 1px solid #99d1ff; }
.mb-help { margin-left: 8px; }

.workspace { flex: 1; display: flex; min-height: 0; padding: 3px 0 0 1px; }
.left { width: 536px; height: 948px; margin-top: 1px; background: #fff; border-radius: 8px; overflow: hidden; }
.left-head { height: 28px; display: flex; align-items: center; padding: 0 8px 0 6px; }
.lic { width: 16px; height: 16px; margin-right: 2px; }
.prop { height: 23.4px; display: flex; align-items: center; padding-left: 4px; white-space: nowrap; }
.vb { width: 12px; height: 12px; margin-left: 7px; }
.vb.big { width: 16px; height: 16px; }
.left-head .vb { margin-left: 8px; }
.ltabs { margin-top: 11px; height: 23px; display: flex; border-bottom: 1px solid #ccc; padding-left: 6px; }
.ltab { display: flex; align-items: center; height: 23px; padding: 0 3px 0 0; border-right: 1px solid #ddd; white-space: nowrap; }
.ltab.w-st { width: 50px; border-right: 0; }
.ltab.w-at { width: 79px; padding-left: 3px; border: 1px solid #ccc; border-bottom: 1px solid #fff; border-radius: 3px 3px 0 0; background: #fff; }
.ltab.w-ch { width: 116px; padding-left: 3px; }
.ltab.w-va { width: 47px; padding-left: 4px; }
.pin { width: 9px; height: 9px; margin: 6px 7px 0 0; }
.ltable { display: flex; flex-direction: column; }
.lrow { display: grid; grid-template-columns: 68px 71px 1fr; height: 23.33px; align-items: stretch; white-space: nowrap; }
.lrow span { display: flex; align-items: center; }
.lhead { height: 25px; }
.c1h { padding-left: 8px; border-right: 1px solid #edf2f9; }
.c1 { padding-left: 14px; border-right: 1px solid #edf2f9; }
.c2 { padding-left: 6px; border-right: 1px solid #edf2f9; }
.c3 { padding-left: 6px; font-size: 16px; letter-spacing: .08px; }
.lhead .c3 { font-size: 15.5px; letter-spacing: 0; }
.more b { color: #111; font-size: 15.4px; letter-spacing: 0; }
.lrow .more { padding-left: 0; }
.more .plus { width: 13px; color: #6a8fb5; font-size: 13px; text-align: center; flex: none; }
.lfill { height: 44px; }

.right { width: 1343px; height: 947px; margin-left: 7px; display: flex; flex-direction: column; background: #fff; border-radius: 6px 6px 0 0; border: 1px solid #c4c8d0; border-top: 0; }
.ftabs { height: 27px; display: flex; align-items: center; background: #cfdeee; padding-left: 1px; border-radius: 6px 6px 0 0; white-space: nowrap; flex: none; }
.ftab { display: flex; align-items: center; height: 27px; padding-top: 2px; font-size: 16px; letter-spacing: .08px; }
.tic { width: 14px; height: 14px; margin-right: 3px; margin-top: -1px; }
.f1 { width: 367px; }
.f2 { width: 373px; }
.f3 { width: 288px; padding-left: 2px; background: #fff; border-radius: 6px 6px 0 0; font-size: 15.7px; letter-spacing: 0; }
.xic { width: 9px; height: 9px; margin-left: 7px; }
.ftabs .vb { margin-left: 7px; }
.ftabs .vb.end { margin-right: 8px; }

.toolbar { height: 33px; display: flex; align-items: center; background: #cadcef; padding-bottom: 5px; flex: none; }
.tb { width: 16px; height: 16px; }
.tb + .tb { margin-left: 3.25px; }
.tsep { width: 1px; height: 20px; background: #a8b8c8; margin: 0 6px 0 3px; }
.ddi { width: 8px; height: 5px; margin: 0 7px; }
.ddi + .tsep { margin-left: 1px; }
.hlp { margin-right: 3px; }

.itabs { height: 24px; display: flex; background: #dfe8f3; border-top: 1px solid #b8c4d0; border-bottom: 1px solid #c0c0c0; white-space: pre; flex: none; font-size: 15.25px; }
.itab { display: flex; align-items: center; padding: 0 0 1px 3px; border-right: 1px solid #b8c4d0; overflow: hidden; height: 23px; }
.itab .tic { margin-right: 2px; }
.i1 { width: 88px; }
.i2 { width: 100px; }
.i3 { width: 149px; }
.i4 { width: 333px; }
.i5 { width: 100px; }
.i6 { width: 334px; }
.i7 { width: 151px; background: #fff; }

.tablewrap { flex: 1; display: flex; min-height: 0; background: #fff; }
.tree { width: 1320px; overflow: hidden; display: flex; flex-direction: column; }
.row { display: grid; grid-template-columns: 416px 110px 137px 94px 1fr; height: 22.5px; flex: none; white-space: pre; }
.row > span { border-right: 1px solid #f0f0f0; border-bottom: 1px solid #f0f0f0; padding-bottom: 1px; }
.head { height: 25px; }
.head > span { border-bottom: 0; }
.filter { height: 22.5px; color: #9a9a9a; }
.filter > span { border-bottom: 3px solid #f2f2f2; }
.name { display: flex; align-items: center; overflow: hidden; min-width: 0; font-size: 15.25px; }
.l1 .name { padding-left: 15.5px; }
.hn { padding-left: 5px; font-size: 15.5px; }
.fn { padding-left: 18px; font-size: 15.5px; }
.fn .ic { margin-right: 4px; }
.tw { width: 18px; height: 10px; flex: none; }
.ic { width: 16px; height: 16px; align-self: flex-start; margin-right: 2px; }
.t { overflow: hidden; white-space: pre; min-width: 0; flex: none; }
.g { color: #8a8a8a; }
.num { display: flex; align-items: center; justify-content: flex-end; padding-right: 2.5px; font-size: 16px; }
.head .num, .filter .num { font-size: 15.5px; padding-right: 4px; }
.head .pct { padding-right: 5px; }
.ret { background: #f8f8f8; }
.head .ret { background: #fff; }
.sorted { position: relative; }
.sorted::before { content: ""; position: absolute; left: 65px; top: -3px; width: 6px; height: 6px; border-right: 1px solid #aaa; border-bottom: 1px solid #aaa; transform: rotate(45deg); }
.sel > span { background: #cde8ff; }
.row > .name .selbox { display: flex; flex: 1; align-items: center; background: #0a74d2; height: 22px; margin-left: -3px; padding-left: 3px; min-width: 0; overflow: hidden; }
.sig { width: 20px; flex: none; align-self: flex-start; text-align: center; font-size: 14px; line-height: 16px; color: #222; }
.total .t { font-weight: 700; color: #111; }

.scroll { flex: 1; display: flex; flex-direction: column; background: #f0f0f0; }
.sbtn { height: 22px; flex: none; display: flex; align-items: center; justify-content: center; background: #fff; }
.scroll .sbtn:last-child { background: #f0f0f0; }
.sarrow { width: 12px; height: 8px; }
.sthumb { height: 496px; flex: none; background: #cdcdcd; }
.strack { flex: 1; }

.trim { flex: 1; margin-left: 4px; display: flex; flex-direction: column; gap: 2px; }
.tgroup { display: flex; flex-direction: column; align-items: center; background: #edf1fa; border: 1px solid #cdd6e6; border-right: 0; border-radius: 5px 0 0 5px; gap: 3px; }
.g1 { height: 103px; }
.g2 { height: 46px; }
.grip { width: 14px; height: 6px; margin-top: 3px; border-top: 1px dotted #999; }
.trimic { width: 16px; height: 16px; }
.trimic.sm { width: 12px; height: 12px; margin: 2px 0; }

.status { height: 26px; display: flex; align-items: flex-end; justify-content: flex-end; padding-right: 328px; flex: none; }
.gauge { width: 192px; height: 23px; padding-left: 28px; display: flex; align-items: center; justify-content: space-between; background: linear-gradient(to right, #e4e8f2 3px, #ffffdf 3px, #ffffdf 119px, #f0f0f0 119px, #f0f0f0 178px, #e4e8f2 178px); border-top: 1px solid #c8c8c8; border-left: 2px dotted #aaa; border-right: 2px dotted #aaa; white-space: nowrap; font-size: 16px; }
.trash { width: 11px; height: 15px; margin-right: 0; }

.taskbar { height: 50px; flex: none; display: flex; background: #000; color: #fff; margin-left: -2px; }
.start { width: 60px; display: flex; align-items: center; justify-content: center; }
.winlogo { width: 20px; height: 20px; }
.search { width: 430px; background: #f0f0f0; display: flex; align-items: center; padding-left: 12px; color: #333; }
.cortana { width: 27px; height: 27px; }
.stext { margin-left: 11px; font-family: "Noto Sans CJK SC", sans-serif; font-size: 19px; flex: 1; }
.micro { width: 14px; height: 24px; margin-right: 19px; }
.tview { width: 63px; display: flex; align-items: center; justify-content: center; }
.tvi { width: 24px; height: 24px; }
.tapp { width: 61.9px; display: flex; align-items: center; justify-content: center; position: relative; }
.tapp.run::after { content: ""; position: absolute; left: 5.5px; right: 5.5px; bottom: 0; height: 3px; background: #99d1f5; }
.tapp.cur { background: #333; }
.tapp.cur::after { left: 0; right: 0; }
.tai { width: 28px; height: 28px; }
.tai.tall { width: 28px; height: 32px; }
.ij { width: 28px; height: 28px; background: #111; border: 2px solid #3a5fb0; border-left-color: #d0306a; border-top-color: #d0306a; display: flex; flex-direction: column; padding: 2px 3px; }
.ijt { font: 700 12px/13px "DejaVu Sans Mono", monospace; }
.iju { width: 8px; height: 2px; background: #fff; margin-top: 2px; }
.fz { width: 29px; height: 29px; background: #b00808; border: 1px dashed #600; color: #fff; font: italic 700 23px/27px "Liberation Sans", sans-serif; text-align: center; letter-spacing: -1px; }
.wps { width: 30px; height: 30px; border-radius: 6px; background: #0bc245; display: flex; align-items: center; justify-content: center; }
.wpss { width: 20px; height: 20px; }
.tray { flex: 1; display: flex; align-items: center; position: relative; font-size: 15px; padding-left: 6px; }
.tr-i { width: 18px; height: 20px; margin-left: 273px; }
.tr-c { width: 18px; height: 11px; margin-left: 27px; }
.tr-b { width: 20px; height: 14px; margin-left: 12px; }
.tr-n { width: 21px; height: 20px; margin-left: 9px; }
.tr-v { width: 20px; height: 20px; margin-left: 8px; }
.ime { margin-left: 10px; font-family: "Noto Sans CJK SC", sans-serif; font-size: 17px; }
.clock { width: 82px; margin-left: 9px; display: flex; flex-direction: column; align-items: center; gap: 1px; font-size: 15px; line-height: 23px; }
.notif { margin-left: 22px; position: relative; width: 30px; height: 36px; margin-top: -2px; }
.nbub { width: 21px; height: 20px; }
.nbadge { position: absolute; left: 10px; top: 14px; width: 21px; height: 21px; border-radius: 50%; background: #333; border: 1px solid #666; font-size: 15px; font-weight: 700; display: flex; align-items: center; justify-content: center; }
.showdesk { position: absolute; right: 5px; top: 0; bottom: 0; width: 1px; background: #555; }

.menu { position: absolute; left: 76px; top: 53px; width: 237px; height: 189px; background: #f0f0f0; border: 1px solid #ccc; box-shadow: 3px 3px 3px rgba(0,0,0,.35); padding-top: 1px; z-index: 10; }
.mi { height: 21.7px; display: flex; align-items: center; position: relative; padding-left: 11px; white-space: nowrap; }
.mi-pref { font-size: 15px; }
.mic { width: 16px; height: 16px; margin-right: 8px; }
.hi { background: #90c8f6; margin: 0 1px; padding-left: 10px; }
.msep { height: 8.3px; position: relative; }
.msep::after { content: ""; position: absolute; left: 32px; right: 2px; top: 3px; height: 1px; background: #dcdcdc; }
.redbox { position: absolute; left: -5px; right: -5px; top: -7px; bottom: -5px; border: 5px solid #ed1c24; box-shadow: inset 0 0 0 1px #fff; z-index: 2; }
```
